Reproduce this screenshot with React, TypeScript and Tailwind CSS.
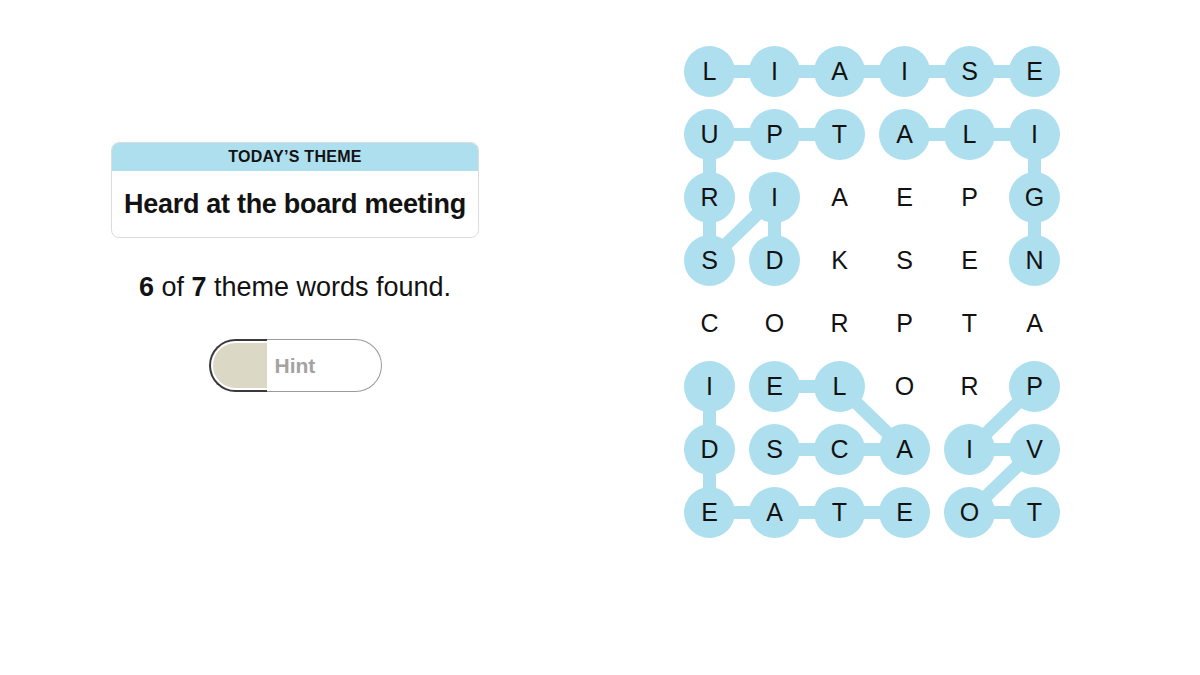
import React from 'react';

const BLUE = '#aedfee';
const CELL_W = 65;
const CELL_H = 63;

const rows = ['LIAISE', 'UPTALI', 'RIAEPG', 'SDKSEN', 'CORPTA', 'IELORP', 'DSCAIV', 'EATEOT'];

// found words as paths of [row, col]
const words: [number, number][][] = [
  [[0, 0], [0, 1], [0, 2], [0, 3], [0, 4], [0, 5]],
  [[1, 2], [1, 1], [1, 0], [2, 0], [3, 0], [2, 1], [3, 1]],
  [[1, 3], [1, 4], [1, 5], [2, 5], [3, 5]],
  [[5, 0], [6, 0], [7, 0], [7, 1], [7, 2], [7, 3]],
  [[6, 1], [6, 2], [6, 3], [5, 2], [5, 1]],
  [[5, 5], [6, 4], [6, 5], [7, 4], [7, 5]],
];

const found = new Set(words.flat().map(([r, c]) => `${r}-${c}`));

const cx = (c: number) => c * CELL_W + CELL_W / 2;
const cy = (r: number) => r * CELL_H + CELL_H / 2;

function Board() {
  return (
    <div className="relative">
      <svg className="absolute inset-0" width={CELL_W * 6} height={CELL_H * 8}>
        {words.map((w, i) => (
          <polyline
            key={i}
            points={w.map(([r, c]) => `${cx(c)},${cy(r)}`).join(' ')}
            fill="none"
            stroke={BLUE}
            strokeWidth={13}
            strokeLinejoin="round"
          />
        ))}
      </svg>
      <div className="relative grid grid-cols-[repeat(6,65px)] grid-rows-[repeat(8,63px)]">
        {rows.map((row, r) =>
          row.split('').map((ch, c) => (
            <div key={`${r}-${c}`} className="flex items-center justify-center">
              <button
                className={
                  'w-[51px] h-[51px] rounded-full flex items-center justify-center text-[25px] text-[#121212] ' +
                  (found.has(`${r}-${c}`) ? 'bg-[#aedfee]' : 'bg-transparent')
                }
              >
                {ch}
              </button>
            </div>
          ))
        )}
      </div>
    </div>
  );
}

export default function App() {
  return (
    <div className="w-[1200px] h-[675px] bg-white flex items-start font-['Liberation_Sans',Arial,sans-serif]">
      {/* left column */}
      <div className="w-[590px] pt-[142px] flex flex-col items-center">
        <div className="w-[368px] rounded-lg border border-[#dcdcdc] overflow-hidden">
          <div className="h-[28px] bg-[#aedfee] flex items-center justify-center text-[16px] font-bold text-[#121212] uppercase tracking-[0.3px]">
            Today’s Theme
          </div>
          <div className="h-[66px] flex items-center justify-center text-[27px] font-bold text-[#121212] tracking-[-0.3px]">
            Heard at the board meeting
          </div>
        </div>

        <p className="mt-[34px] text-[27px] leading-[31px] text-[#121212]">
          <span className="font-bold">6</span> of <span className="font-bold">7</span> theme words found.
        </p>

        <button className="mt-[36px] w-[173px] h-[53px] flex items-stretch">
          <div className="w-[58px] rounded-l-full border-y-2 border-l-2 border-[#3a3a3a] py-[2px] pl-[2px]">
            <div className="h-full rounded-l-full bg-[#dcd8c6]" />
          </div>
          <div className="flex-1 rounded-r-full border-y border-r border-[#9a9a9a] flex items-center pl-[8px] text-[21px] font-bold text-[#a3a3a3]">
            Hint
          </div>
        </button>
      </div>

      {/* board */}
      <div className="ml-[87px] pt-[40px]">
        <Board />
      </div>
    </div>
  );
}
